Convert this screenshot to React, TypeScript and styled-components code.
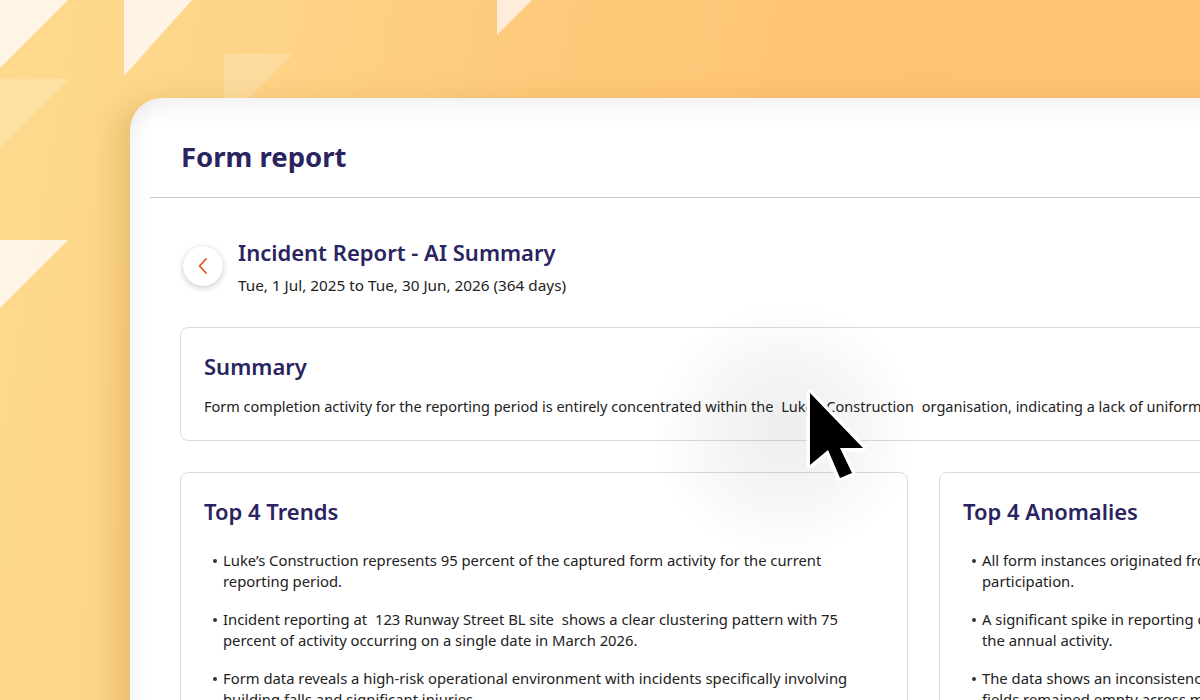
import React from "react";
import styled, { createGlobalStyle } from "styled-components";

const Global = createGlobalStyle`
  html, body { margin: 0; padding: 0; overflow: hidden; }
  body { font-family: "Noto Sans", "Open Sans", sans-serif; }
  * { box-sizing: border-box; }
`;

const Stage = styled.div`
  position: relative;
  width: 1200px;
  height: 700px;
  overflow: hidden;
  padding: 98px 0 0 130px;
  background: linear-gradient(100deg, #fddb8e 0%, #fdd487 20%, #fec97a 42%, #ffc375 70%, #ffc476 100%);
`;

const Decor = styled.svg`
  position: absolute;
  left: 0;
  top: 0;
  pointer-events: none;
`;

const Window = styled.div`
  position: relative;
  width: 1600px;
  height: 800px;
  background: #ffffff;
  border-radius: 32px 0 0 0;
  box-shadow: -14px 6px 30px rgba(170, 110, 20, 0.22),
    inset 0 22px 26px -14px rgba(0, 0, 0, 0.06),
    inset 18px 0 24px -14px rgba(0, 0, 0, 0.05);
`;

const Header = styled.header`
  margin-left: 20px;
  padding: 42px 0 23px 31px;
  border-bottom: 1px solid #c9c9cc;
`;

const PageTitle = styled.h1`
  margin: 0;
  font-size: 27.5px;
  line-height: 34px;
  font-weight: 700;
  color: #2a2461;
`;

const Body = styled.main`
  padding: 40px 50px 0 50px;
  display: flex;
  flex-direction: column;
`;

const TitleRow = styled.div`
  display: flex;
  align-items: center;
  gap: 15px;
  padding-left: 3px;
  margin-bottom: 32px;
`;

const BackButton = styled.button`
  width: 40px;
  height: 40px;
  border-radius: 50%;
  border: none;
  background: #ffffff;
  box-shadow: 0 2px 6px rgba(0, 0, 0, 0.2), 0 0 1px rgba(0, 0, 0, 0.12);
  display: flex;
  align-items: center;
  justify-content: center;
  padding: 0;
  margin-top: -2px;
`;

const TitleBlock = styled.div`
  display: flex;
  flex-direction: column;
  gap: 9px;
`;

const ReportTitle = styled.h2`
  margin: 0;
  font-size: 22px;
  line-height: 28px;
  font-weight: 600;
  color: #2a2461;
`;

const DateRange = styled.div`
  font-size: 15.3px;
  line-height: 20px;
  color: #222222;
`;

const Card = styled.section`
  border: 1px solid #dcdcde;
  border-radius: 8px;
  background: #ffffff;
  padding: 23px 23px 23px 23px;
`;

const CardTitle = styled.h3`
  margin: 0 0 15px 0;
  font-size: 22px;
  line-height: 30px;
  font-weight: 600;
  color: #2a2461;
`;

const Paragraph = styled.p`
  margin: 0;
  font-size: 14.5px;
  line-height: 21px;
  color: #222222;
  white-space: nowrap;
`;

const Chip = styled.span`
  padding: 0 4px;
`;

const Columns = styled.div`
  margin-top: 31px;
  display: grid;
  grid-template-columns: 728px 728px;
  gap: 31px;
`;

const ListCard = styled(Card)`
  padding-right: 34px;
  min-height: 400px;
`;

const BulletList = styled.ul`
  margin: 24px 0 0 0;
  padding: 0 0 0 19px;
  list-style: none;
  display: flex;
  flex-direction: column;
  gap: 17px;
`;

const Bullet = styled.li`
  position: relative;
  font-size: 14.8px;
  line-height: 21px;
  color: #222222;
  &::before {
    content: "";
    position: absolute;
    left: -10px;
    top: 9px;
    width: 4px;
    height: 4px;
    border-radius: 50%;
    background: #333;
  }
`;

const CursorLayer = styled.div`
  position: absolute;
  left: 650px;
  top: 300px;
  width: 270px;
  height: 260px;
  pointer-events: none;
`;

const Glow = styled.div`
  position: absolute;
  inset: 0;
  border-radius: 50%;
  background: radial-gradient(ellipse at 50% 50%, rgba(0, 0, 0, 0.07) 0%, rgba(0, 0, 0, 0.04) 35%, rgba(0, 0, 0, 0) 70%);
`;

const CursorSvg = styled.svg`
  position: absolute;
  left: 154px;
  top: 87px;
`;

const trends = [
  <>Luke’s Construction represents 95 percent of the captured form activity for the current reporting period.</>,
  <>
    Incident reporting at <Chip>123 Runway Street BL site</Chip> shows a clear clustering pattern with 75 percent of activity
    occurring on a single date in March 2026.
  </>,
  <>Form data reveals a high-risk operational environment with incidents specifically involving building falls and significant injuries.</>,
  <>Hazard and near-miss submissions remain low relative to incident reports across the period.</>,
];

const anomalies = [
  <>All form instances originated from a single organisation, indicating an absence of broader participation.</>,
  <>
    A significant spike in reporting occurred in March 2026, accounting for 75 percent of
    <br />
    the annual activity.
  </>,
  <>
    The data shows an inconsistency in form completion, where several required
    <br />
    fields remained empty across multiple submissions.
  </>,
  <>No submissions were recorded for several consecutive months during the period.</>,
];

export default function App() {
  return (
    <>
      <Global />
      <Stage>
        <Decor width="1200" height="700" viewBox="0 0 1200 700">
          <polygon points="0,0 68,0 0,68" fill="#fff8f4" opacity="0.85" />
          <polygon points="124,0 192,0 124,76" fill="#fff8f4" opacity="0.85" />
          <polygon points="497,0 532,0 497,35" fill="#fff4f0" opacity="0.8" />
          <polygon points="224,54 293,54 224,123" fill="#ffffff" opacity="0.2" />
          <polygon points="0,79 69,79 0,148" fill="#ffffff" opacity="0.2" />
          <polygon points="0,240 68,240 0,308" fill="#fff8f4" opacity="0.85" />
        </Decor>
        <Window>
          <Header>
            <PageTitle>Form report</PageTitle>
          </Header>
          <Body>
            <TitleRow>
              <BackButton aria-label="Back">
                <svg width="16" height="20" viewBox="0 0 16 20">
                  <path d="M11 3 L4.5 10 L11 17" fill="none" stroke="#e0561c" strokeWidth="1.8" strokeLinecap="round" strokeLinejoin="round" />
                </svg>
              </BackButton>
              <TitleBlock>
                <ReportTitle>Incident Report - AI Summary</ReportTitle>
                <DateRange>Tue, 1 Jul, 2025 to Tue, 30 Jun, 2026 (364 days)</DateRange>
              </TitleBlock>
            </TitleRow>
            <Card>
              <CardTitle>Summary</CardTitle>
              <Paragraph>
                Form completion activity for the reporting period is entirely concentrated within the <Chip>Luke’s Construction</Chip> organisation, indicating a lack of uniform participation across other organisations.
              </Paragraph>
            </Card>
            <Columns>
              <ListCard>
                <CardTitle>Top 4 Trends</CardTitle>
                <BulletList>
                  {trends.map((t, i) => (
                    <Bullet key={i}>{t}</Bullet>
                  ))}
                </BulletList>
              </ListCard>
              <ListCard>
                <CardTitle>Top 4 Anomalies</CardTitle>
                <BulletList>
                  {anomalies.map((t, i) => (
                    <Bullet key={i}>{t}</Bullet>
                  ))}
                </BulletList>
              </ListCard>
            </Columns>
          </Body>
        </Window>
        <CursorLayer>
          <Glow />
          <CursorSvg width="76" height="108" viewBox="-6 -6 76 108">
            <polygon
              points="0,0 0,72 18,57 30,85 42,80 30,55 53,55"
              fill="#000"
              stroke="#fff"
              strokeWidth="7"
              strokeLinejoin="round"
              paintOrder="stroke"
            />
          </CursorSvg>
        </CursorLayer>
      </Stage>
    </>
  );
}
